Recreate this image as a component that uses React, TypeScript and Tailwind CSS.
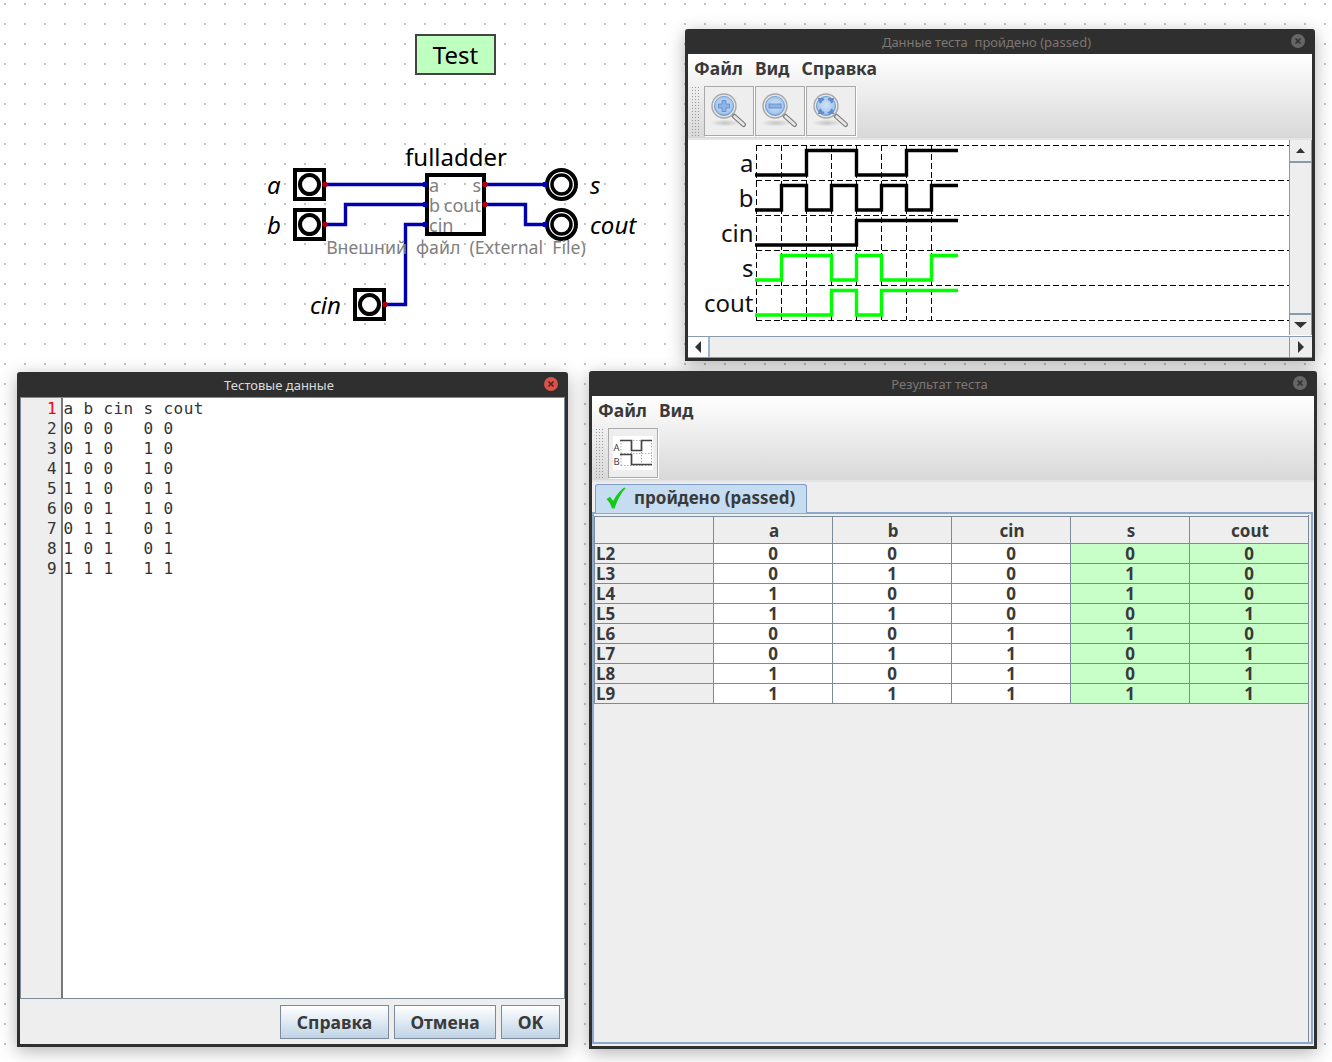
import React from "react";

const FONT = "font-['Noto_Sans',sans-serif]";

const rows = [
	["L2", "0", "0", "0", "0", "0"],
	["L3", "0", "1", "0", "1", "0"],
	["L4", "1", "0", "0", "1", "0"],
	["L5", "1", "1", "0", "0", "1"],
	["L6", "0", "0", "1", "1", "0"],
	["L7", "0", "1", "1", "0", "1"],
	["L8", "1", "0", "1", "0", "1"],
	["L9", "1", "1", "1", "1", "1"],
];

const sourceLines = [
	"a b cin s cout",
	"0 0 0   0 0",
	"0 1 0   1 0",
	"1 0 0   1 0",
	"1 1 0   0 1",
	"0 0 1   1 0",
	"0 1 1   0 1",
	"1 0 1   0 1",
	"1 1 1   1 1",
];

const waves = [
	{ name: "a", color: "#000000", bits: [0, 0, 1, 1, 0, 0, 1, 1] },
	{ name: "b", color: "#000000", bits: [0, 1, 0, 1, 0, 1, 0, 1] },
	{ name: "cin", color: "#000000", bits: [0, 0, 0, 0, 1, 1, 1, 1] },
	{ name: "s", color: "#00ff00", bits: [0, 1, 1, 0, 1, 0, 0, 1] },
	{ name: "cout", color: "#00ff00", bits: [0, 0, 0, 1, 0, 1, 1, 1] },
];

function CloseDot({ red }: { red?: boolean }) {
	return (
		<svg width="16" height="16" viewBox="0 0 16 16">
			<circle cx="8" cy="8" r="7" fill={red ? "#d9534a" : "#666666"} />
			<path d="M5.5 5.5l5 5M10.5 5.5l-5 5" stroke={red ? "#5a1f1a" : "#2f2f2f"} strokeWidth="1.6" />
		</svg>
	);
}

function TitleBar({ title, dim, red }: { title: string; dim?: boolean; red?: boolean }) {
	return (
		<div className="relative flex h-[25px] shrink-0 items-center justify-center pr-[27px] pt-px">
			<span className={`whitespace-pre text-[13px] leading-[16px] ${dim ? "text-[#7d7672]" : "text-[#dcdcdc]"}`}>{title}</span>
			<div className="absolute right-[6px] top-[4px]">
				<CloseDot red={red} />
			</div>
		</div>
	);
}

function Grip() {
	return (
		<div className="h-[50px] w-[10px] bg-[radial-gradient(circle,#9a9a9a_0.7px,transparent_1px)] bg-[length:3px_3px]" />
	);
}

function Magnifier({ kind }: { kind: "in" | "out" | "fit" }) {
	const id = `lens-${kind}`;
	return (
		<svg width="40" height="40" viewBox="0 0 40 40">
			<defs>
				<radialGradient id={id} cx="0.5" cy="0.45" r="0.55">
					<stop offset="0" stopColor="#d4e3f5" />
					<stop offset="0.8" stopColor="#a9c8ec" />
					<stop offset="1" stopColor="#6f9fd8" />
				</radialGradient>
				<radialGradient id={`${id}-shadow`}>
					<stop offset="0" stopColor="#c4c4c4" />
					<stop offset="1" stopColor="#eeeeee" />
				</radialGradient>
			</defs>
			<ellipse cx="16" cy="32" rx="15" ry="3.5" fill={`url(#${id}-shadow)`} />
			<path d="M25 25l9.5 8.5" stroke="#7d7d7d" strokeWidth="5" strokeLinecap="round" />
			<path d="M25.5 25.5l9 8" stroke="#e8e8e8" strokeWidth="2.6" strokeLinecap="round" />
			<circle cx="15" cy="15" r="12" fill="#e6e6e6" stroke="#a8a8a8" strokeWidth="1.4" />
			<circle cx="15" cy="15" r="9.5" fill={`url(#${id})`} stroke="#6f9fd8" strokeWidth="1" />
			{kind === "in" && (
				<path d="M9.5 13h3.5V9.5h4V13h3.5v4H17v3.5h-4V17H9.5z" fill="#8db4e4" stroke="#5f8fcc" strokeWidth="0.9" />
			)}
			{kind === "out" && <rect x="9" y="13" width="12" height="4" fill="#8db4e4" stroke="#5f8fcc" strokeWidth="0.9" />}
			{kind === "fit" && (
				<g fill="#5c8ed0">
					<path d="M7 7h5.5l1 2-2.5 1-1 2.5-2-1z" />
					<path d="M23 7h-5.5l-1 2 2.5 1 1 2.5 2-1z" />
					<path d="M7 23h5.5l1-2-2.5-1-1-2.5-2 1z" />
					<path d="M23 23h-5.5l-1-2 2.5-1 1-2.5 2 1z" />
				</g>
			)}
		</svg>
	);
}

function ToolButton({ children }: { children: React.ReactNode }) {
	return (
		<div className="flex h-[50px] w-[50px] items-center justify-center border border-[#a9a9a9] bg-[#eeeeee] shadow-[1px_1px_0_#ffffff]">
			{children}
		</div>
	);
}

function ArrowButton({ className, path, w, h }: { className: string; path: string; w: number; h: number }) {
	return (
		<div className={`flex items-center justify-center bg-[#eeeeee] ${className}`}>
			<svg width={w} height={h} viewBox={`0 0 ${w} ${h}`}>
				<path d={path} fill="#333333" />
			</svg>
		</div>
	);
}

function WavePanel() {
	const x0 = 68;
	const step = 25;
	const top = 5;
	const rowH = 35;
	return (
		<svg width="601" height="195" viewBox="0 0 601 195" className="block bg-white">
			{[0, 1, 2, 3, 4, 5].map((i) => (
				<line key={i} x1={x0} x2={601} y1={top + i * rowH + 0.5} y2={top + i * rowH + 0.5} stroke="#000" strokeDasharray="6 3" />
			))}
			{[0, 1, 2, 3, 4, 5, 6, 7].map((i) => (
				<line key={i} x1={x0 + i * step + 0.5} x2={x0 + i * step + 0.5} y1={top} y2={top + 5 * rowH} stroke="#000" strokeDasharray="6 3" />
			))}
			{waves.map((w, r) => {
				const hi = top + r * rowH + 5.5;
				const lo = hi + 24.5;
				let prev = w.bits[0] ? hi : lo;
				let d = `M67 ${prev}`;
				w.bits.forEach((b, i) => {
					const y = b ? hi : lo;
					const x = x0 + i * step + 0.5;
					if (y !== prev) d += ` L${x} ${prev} L${x} ${y}`;
					prev = y;
				});
				d += ` L270 ${prev}`;
				return (
					<g key={w.name}>
						<text x="65.5" y={top + r * rowH + 27} textAnchor="end" fontSize="24" fontFamily="Noto Sans" fill="#111">
							{w.name}
						</text>
						<path d={d} fill="none" stroke={w.color} strokeWidth="3.4" strokeLinejoin="miter" />
					</g>
				);
			})}
		</svg>
	);
}

function InputPin({ x, y, label, lx }: { x: number; y: number; label: string; lx: number }) {
	return (
		<g>
			<rect x={x + 2} y={y - 14.5} width="29" height="29" fill="#fff" stroke="#000" strokeWidth="4" />
			<circle cx={x + 16.5} cy={y} r="9.5" fill="#fff" stroke="#000" strokeWidth="4" />
			<text x={lx} y={y + 9} fontSize="24" fontStyle="italic" fontFamily="Noto Sans" fill="#000">
				{label}
			</text>
		</g>
	);
}

function OutputPin({ y, label }: { y: number; label: string }) {
	return (
		<g>
			<circle cx="561.5" cy={y} r="14.5" fill="#fff" stroke="#000" strokeWidth="4" />
			<circle cx="561.5" cy={y} r="9.5" fill="#fff" stroke="#000" strokeWidth="3.5" />
			<text x="590" y={y + 9} fontSize="24" fontStyle="italic" fontFamily="Noto Sans" fill="#000">
				{label}
			</text>
		</g>
	);
}

function Circuit() {
	const wires = [
		"M325 184.5H425",
		"M325 224.5H345.5V204.5H425",
		"M385 304.5H405.5V224.5H425",
		"M485 184.5H545",
		"M485 204.5H525.5V224.5H545",
	];
	const bluePins = [
		[425, 184.5],
		[425, 204.5],
		[425, 224.5],
		[545, 184.5],
		[545, 224.5],
	];
	const redPins = [
		[325, 184.5],
		[325, 224.5],
		[385, 304.5],
		[485, 184.5],
		[485, 204.5],
	];
	return (
		<svg width="680" height="360" viewBox="0 0 680 360" className="absolute left-0 top-0" fontFamily="Noto Sans">
			<rect x="416" y="35" width="79" height="39" fill="#bfffbf" stroke="#444444" strokeWidth="2" />
			<text x="455.5" y="64" textAnchor="middle" fontSize="24" fill="#000">
				Test
			</text>
			<text x="456" y="166" textAnchor="middle" fontSize="24" fill="#000">
				fulladder
			</text>
			<rect x="427" y="175" width="57" height="59" fill="none" stroke="#000" strokeWidth="4" />
			{wires.map((d) => (
				<path key={d} d={d} fill="none" stroke="#0000b0" strokeWidth="3.4" />
			))}
			<InputPin x={293} y={184.5} label="a" lx={267} />
			<InputPin x={293} y={224.5} label="b" lx={267} />
			<InputPin x={353} y={304.5} label="cin" lx={310} />
			<OutputPin y={184.5} label="s" />
			<OutputPin y={224.5} label="cout" />
			{bluePins.map(([x, y]) => (
				<circle key={`${x}-${y}`} cx={x} cy={y} r="2.8" fill="#0000b0" />
			))}
			{redPins.map(([x, y]) => (
				<circle key={`${x}-${y}`} cx={x} cy={y} r="2.8" fill="#b00000" />
			))}
			<g fontSize="18" fill="#808080">
				<text x="429" y="192">a</text>
				<text x="481" y="192" textAnchor="end">s</text>
				<text x="429" y="212">b</text>
				<text x="481" y="212" textAnchor="end">cout</text>
				<text x="429" y="232">cin</text>
				<text x="456" y="254" textAnchor="middle" fontSize="17.7" xmlSpace="preserve">Внешний  файл  (External  File)</text>
			</g>
		</svg>
	);
}

function TestDataWindow() {
	return (
		<div className="absolute left-[17px] top-[372px] flex h-[675px] w-[551px] flex-col rounded-t-[3px] bg-[#2f2f2f] px-[3px] pb-[3px] shadow-[0_4px_18px_rgba(0,0,0,0.3)]">
			<TitleBar title="Тестовые данные" red />
			<div className="flex min-h-0 flex-1 flex-col bg-[#eeeeee]">
				<div className="flex h-[602px] border border-[#7c8a99] font-['DejaVu_Sans_Mono',monospace] text-[16px] leading-[20px] tracking-[0.37px]">
					<div className="w-[42px] shrink-0 border-r-2 border-[#777777] bg-[#eeeeee] pr-[4px] pt-px text-right text-[#333333]">
						{sourceLines.map((_, i) => (
							<div key={i} className={i === 0 ? "text-[#ff0000]" : ""}>
								{i + 1}
							</div>
						))}
					</div>
					<div className="flex-1 bg-white pl-[0.6px] pt-px text-[#333333]">
						{sourceLines.map((line, i) => (
							<div key={i} className="whitespace-pre">
								{line}
							</div>
						))}
					</div>
				</div>
				<div className="flex flex-1 justify-end gap-[5px] pr-[5px] pt-[6px]">
					{[
						["Справка", "w-[109px]"],
						["Отмена", "w-[102px]"],
						["OK", "w-[59px]"],
					].map(([label, width]) => (
						<div
							key={label}
							className={`flex h-[34px] items-center justify-center border border-[#7c8a99] bg-gradient-to-b from-white to-[#bfd3e6] pt-px text-[17.5px] font-bold text-[#3a3a3a] ${width}`}
						>
							{label}
						</div>
					))}
				</div>
			</div>
		</div>
	);
}

function WaveWindow() {
	return (
		<div className="absolute left-[685px] top-[29px] flex h-[332px] w-[630px] flex-col rounded-t-[3px] bg-[#2f2f2f] px-[3px] pb-[3px] shadow-[0_4px_18px_rgba(0,0,0,0.3)]">
			<TitleBar title="Данные теста  пройдено (passed)" dim />
			<div className="flex h-[86px] shrink-0 flex-col border-b-2 border-[#e4e4e4] bg-gradient-to-b from-white to-[#d8d8d8]">
				<div className="flex h-[30px] items-center gap-[12px] pb-[2px] pl-[6px] text-[17.5px] font-bold text-[#3a3a3a]">
					<span>Файл</span>
					<span>Вид</span>
					<span>Справка</span>
				</div>
				<div className="flex items-start pl-[3px] pt-[2px]">
					<Grip />
					<div className="ml-[3px] flex gap-px">
						<ToolButton><Magnifier kind="in" /></ToolButton>
						<ToolButton><Magnifier kind="out" /></ToolButton>
						<ToolButton><Magnifier kind="fit" /></ToolButton>
					</div>
				</div>
			</div>
			<div className="flex flex-1 flex-col bg-white">
				<div className="flex h-[195px]">
					<WavePanel />
					<div className="flex w-[23px] flex-col border-x border-[#8a9aaa] bg-[#eeeeee]">
						<ArrowButton className="h-[23px] border-b-2 border-[#8a9aaa]" w={9} h={5} path="M4.5 0L9 5H0z" />
						<div className="flex-1" />
						<ArrowButton className="h-[22px] border-t-2 border-[#8a9aaa]" w={13} h={6} path="M0 0H13L6.5 6z" />
					</div>
				</div>
				<div className="mt-px flex flex-1 border-y border-[#8a9aaa] bg-[#eeeeee]">
					<ArrowButton className="w-[22px] border-r-2 border-[#9fb6d0] bg-white" w={6} h={12} path="M6 0V12L0 6z" />
					<div className="flex-1" />
					<ArrowButton className="w-[23px] border-l border-[#8a9aaa]" w={6} h={12} path="M0 0V12L6 6z" />
				</div>
			</div>
		</div>
	);
}

function ResultWindow() {
	const headers = ["", "a", "b", "cin", "s", "cout"];
	return (
		<div className="absolute left-[589px] top-[371px] flex h-[678px] w-[728px] flex-col rounded-t-[3px] bg-[#2f2f2f] px-[3px] pb-[3px] shadow-[0_4px_18px_rgba(0,0,0,0.3)]">
			<TitleBar title="Результат теста" dim />
			<div className="flex h-[86px] shrink-0 flex-col border-b-2 border-[#e4e4e4] bg-gradient-to-b from-white to-[#d8d8d8]">
				<div className="flex h-[30px] items-center gap-[12px] pb-[2px] pl-[6px] text-[17.5px] font-bold text-[#3a3a3a]">
					<span>Файл</span>
					<span>Вид</span>
				</div>
				<div className="flex items-start pl-[3px] pt-[2px]">
					<Grip />
					<div className="ml-[3px]">
						<ToolButton>
							<svg width="40" height="34" viewBox="0 0 40 34" fontFamily="Noto Sans">
								<rect width="40" height="34" fill="#fff" />
								<g stroke="#b0b0b0" strokeDasharray="1.5 1.5" fill="none">
									<path d="M8 4.5H39M8 17.5H39M8 29.5H39M8 4V30M18.5 4V30M28.5 4V30M38.5 4V30" />
								</g>
								<path d="M7 4.5H18.5V14.5H28.5V4.5H39M7 18.5H18.5V28.5H39" fill="none" stroke="#444" strokeWidth="1.7" />
								<text x="0.5" y="15" fontSize="9.5" fill="#444">A</text>
								<text x="0.5" y="29" fontSize="9.5" fill="#444">B</text>
							</svg>
						</ToolButton>
					</div>
				</div>
			</div>
			<div className="flex min-h-0 flex-1 flex-col bg-[#eeeeee] pr-px pt-[2px]">
				<div className="z-10 ml-[3px] flex h-[29px] w-[212px] items-center gap-[8px] rounded-t-[3px] border border-b-0 border-[#7e9cc6] bg-[#c6dcf0] pb-[2px] pl-[10px] text-[17px] font-bold text-[#3a3a3a]">
					<svg width="20" height="22" viewBox="0 0 20 22" className="shrink-0">
						<path d="M0.5 12l3.5-2.2 3.2 4.2C10 8.5 14 3 18.5 0.5l1 1C15 6 11.5 13 8.5 21.5H6C5 17.5 3 14.5 0.5 12z" fill="#18c818" />
					</svg>
					<span>пройдено (passed)</span>
				</div>
				<div className="-mt-px flex min-h-0 flex-1 flex-col border-2 border-[#8ea8cc] pt-[1px] text-[17px] font-bold leading-[19px] text-[#3a3a3a]">
					<div className="h-full w-[715px] border-r border-[#7c8a99] pt-px">
						<div className="grid grid-cols-[repeat(6,119px)]">
							{headers.map((h, i) => (
								<div key={i} className="flex h-[28px] items-end justify-center border-y border-l border-[#7c8a99] bg-[#eeeeee] pb-[3px] pl-[2px]">
									{h}
								</div>
							))}
							{rows.map((row) =>
								row.map((cell, i) => (
									<div
										key={`${row[0]}-${i}`}
										className={`h-[20px] border-b border-l border-[#7c8a99] ${i === 0 ? "pl-px text-left" : "text-center"} ${i === 0 ? "bg-[#eeeeee]" : i > 3 ? "bg-[#c8ffc8]" : "bg-white"}`}
									>
										{cell}
									</div>
								))
							)}
						</div>
					</div>
				</div>
				<div className="h-[2px]" />
			</div>
		</div>
	);
}

export default function App() {
	return (
		<div
			className={`relative h-[1062px] w-[1332px] overflow-hidden bg-white bg-[radial-gradient(circle,#c4c4c4_1px,transparent_1.4px)] bg-[length:20px_20px] bg-[position:-5px_-6px] ${FONT}`}
		>
			<Circuit />
			<WaveWindow />
			<TestDataWindow />
			<ResultWindow />
		</div>
	);
}
